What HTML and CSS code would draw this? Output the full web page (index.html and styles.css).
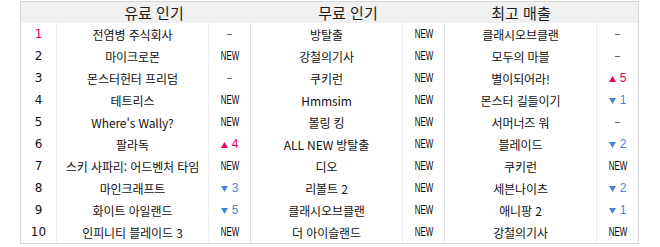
FILE: index.html
```html
<!DOCTYPE html>
<html lang="ko">
<head>
<meta charset="utf-8">
<link rel="stylesheet" href="styles.css">
</head>
<body>
<div class="wrap">
  <div class="chart">
    <div class="head">
      <div class="h-rank"></div>
      <div class="h-title span2">유료 인기</div>
      <div class="h-title span2">무료 인기</div>
      <div class="h-title">최고 매출</div>
      <div class="h-rest"></div>
    </div>
    <div class="body">
      <div class="rank hot">1</div><div class="name">전염병 주식회사</div><div class="chg"><span class="dash">–</span></div><div class="name">방탈출</div><div class="chg"><span class="new">NEW</span></div><div class="name">클래시오브클랜</div><div class="chg last"><span class="dash">–</span></div>

      <div class="rank">2</div><div class="name">마이크로몬</div><div class="chg"><span class="new">NEW</span></div><div class="name">강철의기사</div><div class="chg"><span class="new">NEW</span></div><div class="name">모두의 마블</div><div class="chg last"><span class="dash">–</span></div>

      <div class="rank">3</div><div class="name">몬스터헌터 프리덤</div><div class="chg"><span class="dash">–</span></div><div class="name">쿠키런</div><div class="chg"><span class="new">NEW</span></div><div class="name">별이되어라!</div><div class="chg last"><span class="up"><svg class="tri" viewBox="0 0 7 6" width="7" height="6"><polygon points="3.5,0 7,6 0,6"/></svg>5</span></div>

      <div class="rank">4</div><div class="name">테트리스</div><div class="chg"><span class="new">NEW</span></div><div class="name">Hmmsim</div><div class="chg"><span class="new">NEW</span></div><div class="name">몬스터 길들이기</div><div class="chg last"><span class="down"><svg class="tri" viewBox="0 0 7 6" width="7" height="6"><polygon points="0,0 7,0 3.5,6"/></svg>1</span></div>

      <div class="rank">5</div><div class="name">Where's Wally?</div><div class="chg"><span class="new">NEW</span></div><div class="name">볼링 킹</div><div class="chg"><span class="new">NEW</span></div><div class="name">서머너즈 워</div><div class="chg last"><span class="dash">–</span></div>

      <div class="rank">6</div><div class="name">팔라독</div><div class="chg"><span class="up"><svg class="tri" viewBox="0 0 7 6" width="7" height="6"><polygon points="3.5,0 7,6 0,6"/></svg>4</span></div><div class="name">ALL NEW 방탈출</div><div class="chg"><span class="new">NEW</span></div><div class="name">블레이드</div><div class="chg last"><span class="down"><svg class="tri" viewBox="0 0 7 6" width="7" height="6"><polygon points="0,0 7,0 3.5,6"/></svg>2</span></div>

      <div class="rank">7</div><div class="name">스키 사파리: 어드벤처 타임</div><div class="chg"><span class="new">NEW</span></div><div class="name">디오</div><div class="chg"><span class="new">NEW</span></div><div class="name">쿠키런</div><div class="chg last"><span class="new">NEW</span></div>

      <div class="rank">8</div><div class="name">마인크래프트</div><div class="chg"><span class="down"><svg class="tri" viewBox="0 0 7 6" width="7" height="6"><polygon points="0,0 7,0 3.5,6"/></svg>3</span></div><div class="name">리볼트 2</div><div class="chg"><span class="new">NEW</span></div><div class="name">세븐나이츠</div><div class="chg last"><span class="down"><svg class="tri" viewBox="0 0 7 6" width="7" height="6"><polygon points="0,0 7,0 3.5,6"/></svg>2</span></div>

      <div class="rank">9</div><div class="name">화이트 아일랜드</div><div class="chg"><span class="down"><svg class="tri" viewBox="0 0 7 6" width="7" height="6"><polygon points="0,0 7,0 3.5,6"/></svg>5</span></div><div class="name">클래시오브클랜</div><div class="chg"><span class="new">NEW</span></div><div class="name">애니팡 2</div><div class="chg last"><span class="down"><svg class="tri" viewBox="0 0 7 6" width="7" height="6"><polygon points="0,0 7,0 3.5,6"/></svg>1</span></div>

      <div class="rank">10</div><div class="name">인피니티 블레이드 3</div><div class="chg"><span class="new">NEW</span></div><div class="name">더 아이슬랜드</div><div class="chg"><span class="new">NEW</span></div><div class="name">강철의기사</div><div class="chg last"><span class="new">NEW</span></div>
    </div>
  </div>
</div>
</body>
</html>
```

FILE: styles.css
```css
* { box-sizing: border-box; }
html, body { margin: 0; padding: 0; background: #fff; }
body {
  font-family: "Noto Sans CJK KR", "Noto Sans", sans-serif;
  color: #111;
}
.wrap {
  padding: 1px 0 0 20px;
}
.chart {
  width: 619px;
  border: 1px solid #d8d8d8;
}
.head {
  display: grid;
  grid-template-columns: 36px 194px 194px 152px 41px;
  background: #f0f0f0;
  height: 21px;
}
.h-title {
  font-size: 15px;
  line-height: 21px;
  text-align: center;
  color: #1a1a1a;
}
.body {
  display: grid;
  grid-template-columns: 36px 152px 42px 152px 42px 152px 41px;
  grid-auto-rows: 22px;
}
.body > div {
  display: flex;
  align-items: center;
  justify-content: center;
  border-right: 1px solid #ececec;
  font-size: 12px;
  white-space: nowrap;
}
.body > .chg { border-right-color: #e2e2e2; }
.body > .last { border-right: none; }
.rank {
  font-family: "DejaVu Sans", sans-serif;
  font-size: 12px;
  color: #111;
}
.rank.hot { color: #e8005a; }
.name { letter-spacing: -0.1px; }
.new {
  display: inline-block;
  font-family: "Liberation Sans", sans-serif;
  font-size: 12px;
  transform: scaleX(0.66);
  color: #000;
}
.dash {
  font-family: "Liberation Sans", sans-serif;
  font-size: 9px;
  color: #111;
}
.up, .down {
  display: inline-flex;
  align-items: baseline;
  font-family: "Liberation Sans", sans-serif;
  font-size: 12px;
}
.up { color: #e8005a; }
.down { color: #4a84d6; }
.tri {
  fill: currentColor;
  margin-right: 4px;
  margin-bottom: 1px;
}
```
